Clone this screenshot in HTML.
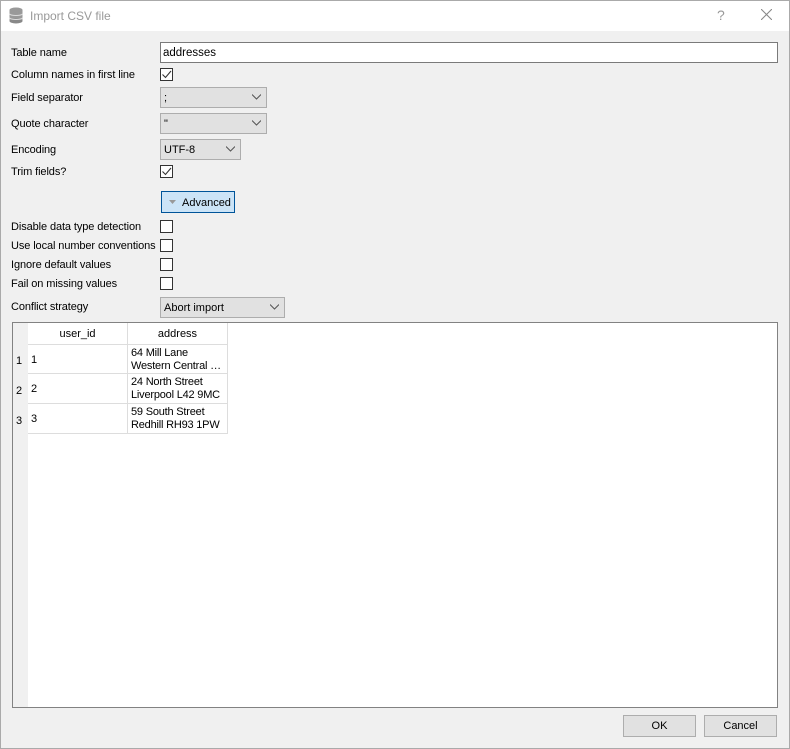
<!DOCTYPE html>
<html><head><style>
*{box-sizing:border-box;margin:0;padding:0}
body{width:790px;height:749px;background:#f0f0f0;font-family:"Liberation Sans",sans-serif;font-size:11px;color:#000;position:relative;overflow:hidden}
.win{position:absolute;left:0;top:0;width:790px;height:749px;border:1px solid #aaa}
.title{position:absolute;left:1px;top:1px;width:788px;height:30px;background:#fff}
.abs{position:absolute}
.lbl{position:absolute;left:11px;white-space:nowrap;letter-spacing:-0.1px}
.cb{position:absolute;left:160px;width:13px;height:13px;border:1px solid #333;background:#fff}
.combo{position:absolute;height:21px;background:#e1e1e1;border:1px solid #adadad;padding:4px 0 0 3px}
.combo svg{position:absolute;right:5px;top:6px}
.btn{position:absolute;height:22px;background:#e1e1e1;border:1px solid #adadad;text-align:center;line-height:20px}
.cell{position:absolute;border-right:1px solid #ddd;border-bottom:1px solid #ddd;background:#fff;padding-left:3px;white-space:nowrap;overflow:hidden}
</style></head><body>
<div class="win"></div>
<div class="title"></div>
<svg class="abs" style="left:8px;top:7px" width="16" height="17" viewBox="0 0 16 17"><ellipse cx="8" cy="3" rx="6.5" ry="2.5" fill="#999"/><rect x="1.5" y="3" width="13" height="11" fill="#999"/><ellipse cx="8" cy="14" rx="6.5" ry="2.5" fill="#888"/><path d="M1.5 7c2 2 11 2 13 0M1.5 11c2 2 11 2 13 0" stroke="#ddd" fill="none"/></svg>
<div class="abs" style="left:30px;top:9px;font-size:12px;color:#999">Import CSV file</div>
<div class="abs" style="left:717px;top:7px;font-size:14px;color:#999">?</div>
<svg class="abs" style="left:761px;top:9px" width="11" height="11"><path d="M0 0L11 11M11 0L0 11" stroke="#888" stroke-width="1.1"/></svg>

<div class="lbl" style="top:47px">Table name</div>
<div class="abs" style="left:160px;top:42px;width:618px;height:21px;background:#fff;border:1px solid #7a7a7a;padding:4px 0 0 2px;font-size:11.5px">addresses</div>
<div class="lbl" style="top:69px">Column names in first line</div>
<div class="cb" style="top:68px"><svg width="11" height="11" style="position:absolute;left:0;top:0"><path d="M1.5 5.5L4.5 8.5L10 2" stroke="#333" stroke-width="1.1" fill="none"/></svg></div>
<div class="lbl" style="top:92px">Field separator</div>
<div class="combo" style="left:160px;top:87px;width:107px">;<svg width="9" height="6"><path d="M0 0.5L4.5 5L9 0.5" stroke="#555" fill="none"/></svg></div>
<div class="lbl" style="top:118px">Quote character</div>
<div class="combo" style="left:160px;top:113px;width:107px">"<svg width="9" height="6"><path d="M0 0.5L4.5 5L9 0.5" stroke="#555" fill="none"/></svg></div>
<div class="lbl" style="top:144px">Encoding</div>
<div class="combo" style="left:160px;top:139px;width:81px">UTF-8<svg width="9" height="6"><path d="M0 0.5L4.5 5L9 0.5" stroke="#555" fill="none"/></svg></div>
<div class="lbl" style="top:166px">Trim fields?</div>
<div class="cb" style="top:165px"><svg width="11" height="11" style="position:absolute;left:0;top:0"><path d="M1.5 5.5L4.5 8.5L10 2" stroke="#333" stroke-width="1.1" fill="none"/></svg></div>
<div class="abs" style="left:161px;top:191px;width:74px;height:22px;background:#cce4f7;border:1px solid #005499;padding:5px 0 0 20px">Advanced</div>
<svg class="abs" style="left:169px;top:200px" width="7" height="4"><path d="M0 0H7L3.5 4Z" fill="#999"/></svg>

<div class="lbl" style="top:221px">Disable data type detection</div>
<div class="cb" style="top:220px"></div>
<div class="lbl" style="top:240px">Use local number conventions</div>
<div class="cb" style="top:239px"></div>
<div class="lbl" style="top:259px">Ignore default values</div>
<div class="cb" style="top:258px"></div>
<div class="lbl" style="top:278px">Fail on missing values</div>
<div class="cb" style="top:277px"></div>
<div class="lbl" style="top:301px">Conflict strategy</div>
<div class="combo" style="left:160px;top:297px;width:125px">Abort import<svg width="9" height="6"><path d="M0 0.5L4.5 5L9 0.5" stroke="#555" fill="none"/></svg></div>

<div class="abs" style="left:12px;top:322px;width:766px;height:386px;background:#fff;border:1px solid #828282"></div>
<div class="abs" style="left:13px;top:323px;width:15px;height:384px;background:#f0f0f0"></div>
<div class="cell" style="left:28px;top:323px;width:100px;height:22px;text-align:center;padding:5px 0 0">user_id</div>
<div class="cell" style="left:128px;top:323px;width:100px;height:22px;text-align:center;padding:5px 0 0">address</div>
<div class="abs" style="left:16px;top:355px">1</div>
<div class="abs" style="left:16px;top:385px">2</div>
<div class="abs" style="left:16px;top:415px">3</div>
<div class="cell" style="left:28px;top:345px;width:100px;height:29px;padding-top:9px">1</div>
<div class="cell" style="left:128px;top:345px;width:100px;height:29px;line-height:13px;padding-top:2px;letter-spacing:-0.2px">64 Mill Lane<br>Western Central …</div>
<div class="cell" style="left:28px;top:374px;width:100px;height:30px;padding-top:9px">2</div>
<div class="cell" style="left:128px;top:374px;width:100px;height:30px;line-height:13px;padding-top:2px;letter-spacing:-0.2px">24 North Street<br>Liverpool L42 9MC</div>
<div class="cell" style="left:28px;top:404px;width:100px;height:30px;padding-top:9px">3</div>
<div class="cell" style="left:128px;top:404px;width:100px;height:30px;line-height:13px;padding-top:2px;letter-spacing:-0.2px">59 South Street<br>Redhill RH93 1PW</div>

<div class="btn" style="left:623px;top:715px;width:73px">OK</div>
<div class="btn" style="left:704px;top:715px;width:73px">Cancel</div>
</body></html>
